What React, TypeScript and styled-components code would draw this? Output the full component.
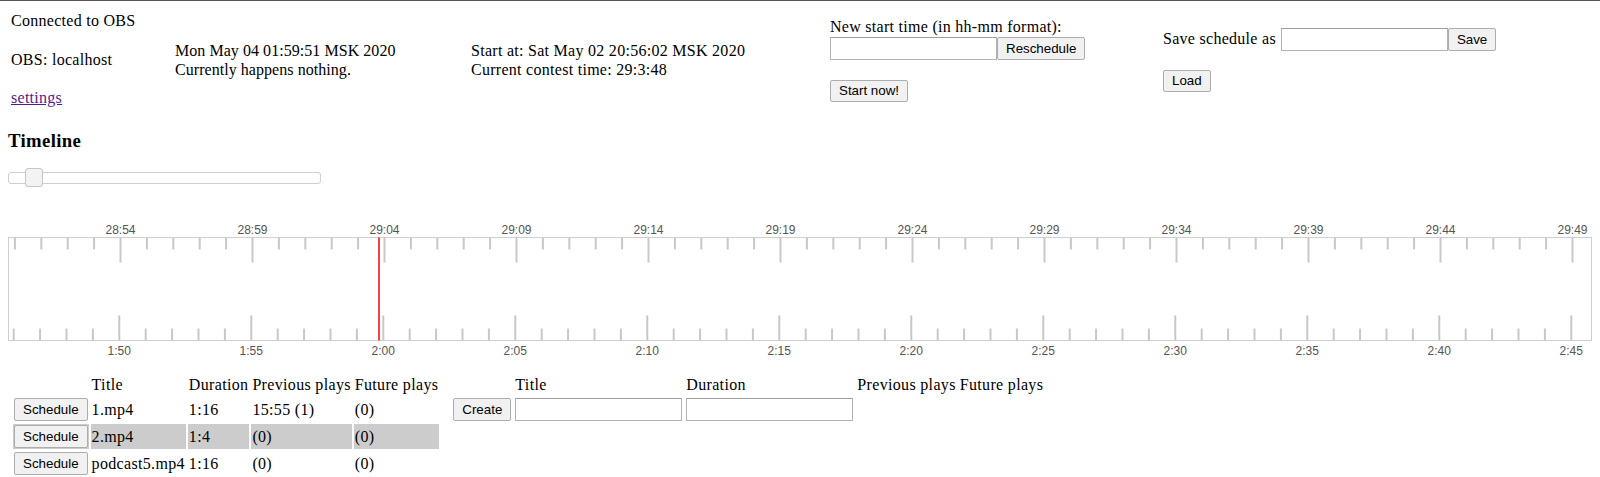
import React from "react";
import styled, { createGlobalStyle } from "styled-components";

const GlobalStyle = createGlobalStyle`
  html, body {
    margin: 0;
    padding: 0;
    overflow: hidden;
    background: #fff;
  }
  body {
    font-family: "Liberation Serif", "Times New Roman", serif;
    font-size: 16px;
    letter-spacing: 0.28px;
    color: #000;
  }
`;

const Page = styled.div`
  padding: 0 8px;
  border-top: 1px solid #555;
`;

const Header = styled.header`
  display: grid;
  grid-template-columns: 164px 296px 359px 333px 1fr;
  align-items: center;
  height: 117px;
  padding-left: 3px;
`;

const StatusColumn = styled.div`
  display: flex;
  flex-direction: column;
  gap: 20.4px;
`;

const StatusLine = styled.div`
  line-height: 18px;
  white-space: nowrap;
`;

const SettingsLink = styled.a`
  color: #551a8b;
  text-decoration: underline;
`;

const InfoBlock = styled.div<{ $tight?: boolean }>`
  line-height: 19px;
  white-space: nowrap;
  letter-spacing: ${(p) => (p.$tight ? "0.05px" : "0.28px")};
`;

const FormColumn = styled.div`
  display: flex;
  flex-direction: column;
  align-items: flex-start;
`;

const FieldLabel = styled.div`
  line-height: 18px;
  margin-bottom: 1px;
  white-space: nowrap;
`;

const InputRow = styled.div`
  display: flex;
  align-items: center;
`;

const InlineLabel = styled.span`
  margin-right: 5px;
  white-space: nowrap;
`;

const TextInput = styled.input`
  box-sizing: border-box;
  width: 167px;
  height: 23px;
  margin: 0;
  padding: 1px 3px;
  border: 1px solid #b3b3b3;
  border-top-color: #9f9f9f;
  font-family: "Liberation Sans", Arial, sans-serif;
  font-size: 13.33px;
  letter-spacing: normal;
  background: #fff;
  display: block;
`;

const Button = styled.button<{ $tall?: boolean; $offset?: number }>`
  box-sizing: border-box;
  display: block;
  height: ${(p) => (p.$tall ? 23 : 22)}px;
  margin: ${(p) => p.$offset ?? 0}px 0 0;
  padding: 0 8px;
  border: 1px solid #adadad;
  border-radius: 2px;
  background: #f1f1f1;
  color: #000;
  font-family: "Liberation Sans", Arial, sans-serif;
  font-size: 13.33px;
  letter-spacing: normal;
  white-space: nowrap;
  appearance: none;
`;

const SectionTitle = styled.h3`
  margin: 12px 0 0;
  font-size: 18.72px;
  line-height: 22px;
  font-weight: bold;
  letter-spacing: 0.37px;
`;

const Slider = styled.input`
  -webkit-appearance: none;
  appearance: none;
  display: block;
  width: 313px;
  height: 19px;
  margin: 16px 0 0;
  padding: 0;
  background: transparent;

  &::-webkit-slider-runnable-track {
    box-sizing: border-box;
    height: 12px;
    border: 1px solid #cfcfcf;
    border-radius: 3px;
    background: #fff;
  }

  &::-webkit-slider-thumb {
    -webkit-appearance: none;
    box-sizing: border-box;
    width: 18px;
    height: 19px;
    margin-top: -4.5px;
    border: 1px solid #c6c6c6;
    border-radius: 3px;
    background: #f3f3f3;
  }
`;

const TimelineSvg = styled.svg`
  display: block;
  margin-top: 23px;
  letter-spacing: 0;
`;

const Tables = styled.div`
  display: flex;
  align-items: flex-start;
  gap: 9px;
  margin-top: 11px;
  padding-left: 3px;
`;

const Table = styled.table`
  border-collapse: separate;
  border-spacing: 2px;
  font-size: 16px;
  letter-spacing: 0.33px;
`;

const Cell = styled.td<{ $selected?: boolean }>`
  padding: 1px;
  line-height: 18.4px;
  text-align: left;
  vertical-align: middle;
  white-space: nowrap;
  background: ${(p) => (p.$selected ? "#cccccc" : "transparent")};
`;

const TOP_LABELS = [
  "28:54", "28:59", "29:04", "29:09", "29:14", "29:19",
  "29:24", "29:29", "29:34", "29:39", "29:44", "29:49",
];
const BOTTOM_LABELS = [
  "1:50", "1:55", "2:00", "2:05", "2:10", "2:15",
  "2:20", "2:25", "2:30", "2:35", "2:40", "2:45",
];

const WIDTH = 1584;
const STEP = 26.4;
const TOP_ORIGIN = 112.5;
const BOTTOM_ORIGIN = 111.3;
const BOX_TOP = 27.5;
const BOX_BOTTOM = 130.5;
const NOW_X = 371;

const Timeline = () => {
  const ticks: React.ReactNode[] = [];
  for (let j = -4; j <= 55; j++) {
    const major = j % 5 === 0;
    const len = major ? 25 : 12;
    const tx = TOP_ORIGIN + j * STEP;
    const bx = BOTTOM_ORIGIN + j * STEP;
    ticks.push(
      <line key={`t${j}`} x1={tx} x2={tx} y1={BOX_TOP} y2={BOX_TOP + len} stroke="#c8c8c8" strokeWidth={2} />,
      <line key={`b${j}`} x1={bx} x2={bx} y1={BOX_BOTTOM - len} y2={BOX_BOTTOM} stroke="#c8c8c8" strokeWidth={2} />
    );
  }
  return (
    <TimelineSvg width={WIDTH} height={152} viewBox={`0 0 ${WIDTH} 152`}>
      <rect x={0.5} y={BOX_TOP} width={WIDTH - 1} height={BOX_BOTTOM - BOX_TOP} fill="#fff" stroke="#cfcfcf" strokeWidth={1} />
      {ticks}
      {TOP_LABELS.map((label, k) => (
        <text key={label} x={TOP_ORIGIN + k * 132} y={23.7} textAnchor="middle" fontFamily="'Liberation Sans', Arial, sans-serif" fontSize={12} fill="#555">
          {label}
        </text>
      ))}
      {BOTTOM_LABELS.map((label, k) => (
        <text key={label} x={BOTTOM_ORIGIN + k * 132} y={145.3} textAnchor="middle" fontFamily="'Liberation Sans', Arial, sans-serif" fontSize={12} fill="#555">
          {label}
        </text>
      ))}
      <line x1={NOW_X} x2={NOW_X} y1={BOX_TOP} y2={BOX_BOTTOM} stroke="#f00" strokeWidth={1.5} />
    </TimelineSvg>
  );
};

const media = [
  { title: "1.mp4", duration: "1:16", previous: "15:55 (1)", future: "(0)", selected: false },
  { title: "2.mp4", duration: "1:4", previous: "(0)", future: "(0)", selected: true },
  { title: "podcast5.mp4", duration: "1:16", previous: "(0)", future: "(0)", selected: false },
];

const App = () => (
  <>
    <GlobalStyle />
    <Page>
      <Header>
        <StatusColumn>
          <StatusLine>Connected to OBS</StatusLine>
          <StatusLine>OBS: localhost</StatusLine>
          <StatusLine>
            <SettingsLink href="#settings">settings</SettingsLink>
          </StatusLine>
        </StatusColumn>
        <InfoBlock $tight>
          Mon May 04 01:59:51 MSK 2020
          <br />
          Currently happens nothing.
        </InfoBlock>
        <InfoBlock>
          Start at: Sat May 02 20:56:02 MSK 2020
          <br />
          Current contest time: 29:3:48
        </InfoBlock>
        <FormColumn>
          <FieldLabel>New start time (in hh-mm format):</FieldLabel>
          <InputRow>
            <TextInput type="text" />
            <Button $tall>Reschedule</Button>
          </InputRow>
          <Button $offset={20}>Start now!</Button>
        </FormColumn>
        <FormColumn>
          <InputRow>
            <InlineLabel>Save schedule as</InlineLabel>
            <TextInput type="text" />
            <Button $tall>Save</Button>
          </InputRow>
          <Button $offset={19}>Load</Button>
        </FormColumn>
      </Header>

      <SectionTitle>Timeline</SectionTitle>
      <Slider type="range" min={0} max={1000} defaultValue={55} />
      <Timeline />

      <Tables>
        <Table>
          <tbody>
            <tr>
              <Cell />
              <Cell>Title</Cell>
              <Cell>Duration</Cell>
              <Cell>Previous plays</Cell>
              <Cell>Future plays</Cell>
            </tr>
            {media.map((m) => (
              <tr key={m.title}>
                <Cell $selected={m.selected}>
                  <Button $tall>Schedule</Button>
                </Cell>
                <Cell $selected={m.selected}>{m.title}</Cell>
                <Cell $selected={m.selected}>{m.duration}</Cell>
                <Cell $selected={m.selected}>{m.previous}</Cell>
                <Cell $selected={m.selected}>{m.future}</Cell>
              </tr>
            ))}
          </tbody>
        </Table>
        <Table>
          <tbody>
            <tr>
              <Cell />
              <Cell>Title</Cell>
              <Cell>Duration</Cell>
              <Cell>Previous plays</Cell>
              <Cell>Future plays</Cell>
            </tr>
            <tr>
              <Cell>
                <Button $tall>Create</Button>
              </Cell>
              <Cell>
                <TextInput type="text" />
              </Cell>
              <Cell>
                <TextInput type="text" />
              </Cell>
              <Cell />
              <Cell />
            </tr>
          </tbody>
        </Table>
      </Tables>
    </Page>
  </>
);

export default App;
